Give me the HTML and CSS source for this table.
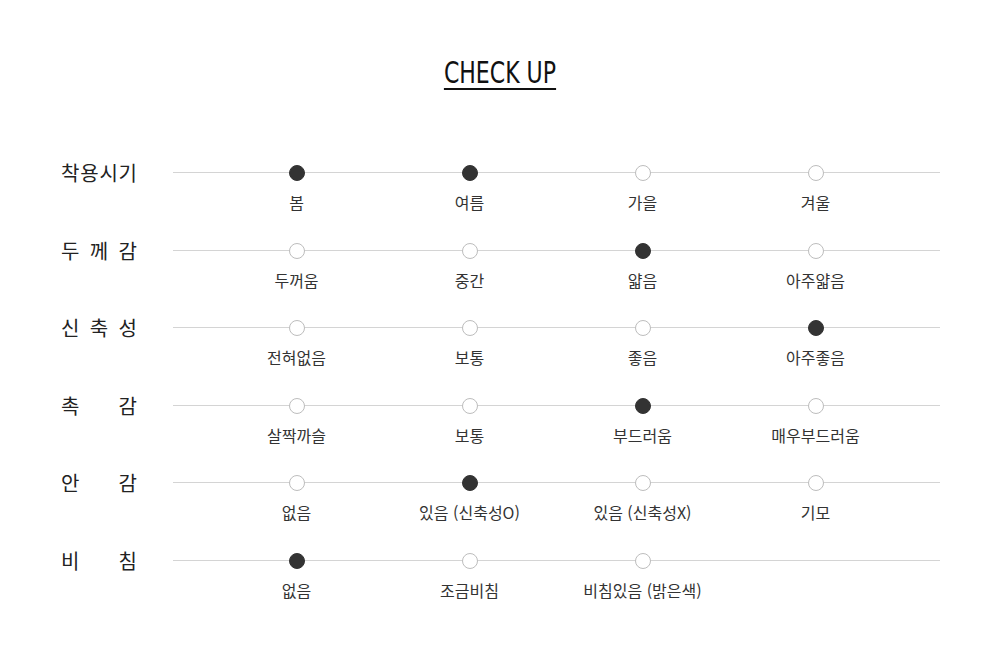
FILE: index.html
```html
<!DOCTYPE html>
<html lang="ko">
<head>
<meta charset="utf-8">
<title>CHECK UP</title>
<link rel="stylesheet" href="styles.css">
</head>
<body>
<main class="checkup">
  <h2 class="title"><span class="title-text">CHECK UP</span></h2>
  <div class="rows">
    <div class="row">
      <div class="label"><span>착</span><span>용</span><span>시</span><span>기</span></div>
      <div class="track">
        <div class="opt"><span class="dot on"></span><span class="name">봄</span></div>
        <div class="opt"><span class="dot on"></span><span class="name">여름</span></div>
        <div class="opt"><span class="dot"></span><span class="name">가을</span></div>
        <div class="opt"><span class="dot"></span><span class="name">겨울</span></div>
      </div>
    </div>
    <div class="row">
      <div class="label"><span>두</span><span>께</span><span>감</span></div>
      <div class="track">
        <div class="opt"><span class="dot"></span><span class="name">두꺼움</span></div>
        <div class="opt"><span class="dot"></span><span class="name">중간</span></div>
        <div class="opt"><span class="dot on"></span><span class="name">얇음</span></div>
        <div class="opt"><span class="dot"></span><span class="name">아주얇음</span></div>
      </div>
    </div>
    <div class="row">
      <div class="label"><span>신</span><span>축</span><span>성</span></div>
      <div class="track">
        <div class="opt"><span class="dot"></span><span class="name">전혀없음</span></div>
        <div class="opt"><span class="dot"></span><span class="name">보통</span></div>
        <div class="opt"><span class="dot"></span><span class="name">좋음</span></div>
        <div class="opt"><span class="dot on"></span><span class="name">아주좋음</span></div>
      </div>
    </div>
    <div class="row">
      <div class="label"><span>촉</span><span>감</span></div>
      <div class="track">
        <div class="opt"><span class="dot"></span><span class="name">살짝까슬</span></div>
        <div class="opt"><span class="dot"></span><span class="name">보통</span></div>
        <div class="opt"><span class="dot on"></span><span class="name">부드러움</span></div>
        <div class="opt"><span class="dot"></span><span class="name">매우부드러움</span></div>
      </div>
    </div>
    <div class="row">
      <div class="label"><span>안</span><span>감</span></div>
      <div class="track">
        <div class="opt"><span class="dot"></span><span class="name">없음</span></div>
        <div class="opt"><span class="dot on"></span><span class="name">있음 (신축성O)</span></div>
        <div class="opt"><span class="dot"></span><span class="name">있음 (신축성X)</span></div>
        <div class="opt"><span class="dot"></span><span class="name">기모</span></div>
      </div>
    </div>
    <div class="row">
      <div class="label"><span>비</span><span>침</span></div>
      <div class="track">
        <div class="opt"><span class="dot on"></span><span class="name">없음</span></div>
        <div class="opt"><span class="dot"></span><span class="name">조금비침</span></div>
        <div class="opt"><span class="dot"></span><span class="name">비침있음 (밝은색)</span></div>
      </div>
    </div>
  </div>
</main>
</body>
</html>
```
FILE: styles.css
```css
html, body {
  margin: 0;
  padding: 0;
  background: #fff;
}

body {
  font-family: "Noto Sans CJK KR", "Noto Sans", sans-serif;
  color: #333;
}

.checkup {
  width: 1000px;
  padding-top: 58px;
}

.title {
  margin: 0;
  text-align: center;
  font-weight: 400;
  line-height: 1;
}

.title-text {
  display: inline-block;
  font-family: "Liberation Sans Narrow", "DejaVu Sans Condensed", "Liberation Sans", sans-serif;
  font-size: 31px;
  line-height: 28px;
  padding-bottom: 2px;
  color: #111;
  border-bottom: 2px solid #111;
  transform: scaleX(0.79);
}

.rows {
  margin-top: 75px;
  display: flex;
  flex-direction: column;
  gap: 29.6px;
}

.row {
  display: grid;
  grid-template-columns: 112px 767px;
  padding-left: 61px;
}

.label {
  width: 76px;
  height: 16px;
  display: flex;
  justify-content: space-between;
  align-items: center;
  font-size: 20px;
  line-height: 16px;
  color: #222;
}

.track {
  display: grid;
  grid-template-columns: repeat(4, 173px);
  padding: 0 38px 0 37px;
  background: linear-gradient(#d4d4d4, #d4d4d4) 0 7px / 100% 1px no-repeat;
}

.opt {
  display: flex;
  flex-direction: column;
  align-items: center;
}

.dot {
  width: 16px;
  height: 16px;
  box-sizing: border-box;
  border-radius: 50%;
  border: 1px solid #bdbdbd;
  background: #fff;
}

.dot.on {
  background: #333;
  border-color: #333;
}

.name {
  margin-top: 10px;
  font-size: 16px;
  line-height: 22px;
  color: #333;
  white-space: nowrap;
}
```
